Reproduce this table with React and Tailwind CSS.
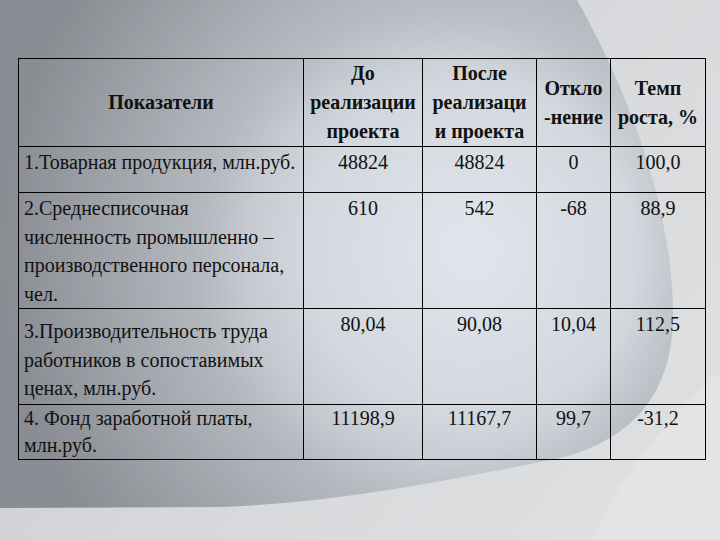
const rows = [
  {
    label: ['1.Товарная продукция, млн.руб.'],
    values: ['48824', '48824', '0', '100,0'],
    h: 'h-[46px]',
    pt: 'pt-[1px]',
  },
  {
    label: [
      '2.Среднесписочная',
      'численность промышленно –',
      'производственного персонала,',
      'чел.',
    ],
    values: ['610', '542', '-68', '88,9'],
    h: 'h-[116px]',
    pt: 'pt-[1px]',
  },
  {
    label: [
      '3.Производительность труда',
      'работников в сопоставимых',
      'ценах, млн.руб.',
    ],
    values: ['80,04', '90,08', '10,04', '112,5'],
    h: 'h-[96px]',
    pt: 'pt-[1px]',
    labelPt: 'pt-[8px]',
  },
  {
    label: ['4. Фонд заработной платы,', 'млн.руб.'],
    values: ['11198,9', '11167,7', '99,7', '-31,2'],
    h: 'h-[55px] leading-[27px]',
    pt: 'pt-0',
  },
]

const Background = () => (
  <svg
    className="absolute inset-0"
    width="720"
    height="540"
    viewBox="0 0 720 540"
  >
    <defs>
      <linearGradient id="base" x1="0" y1="0" x2="720" y2="540" gradientUnits="userSpaceOnUse">
        <stop offset="0" stopColor="#c6c8cb" />
        <stop offset="0.5" stopColor="#d6d8db" />
        <stop offset="1" stopColor="#e0e1e2" />
      </linearGradient>
      <radialGradient id="sphere" cx="470" cy="250" r="470" gradientUnits="userSpaceOnUse">
        <stop offset="0" stopColor="#e1e6ec" />
        <stop offset="0.35" stopColor="#d3d8de" />
        <stop offset="0.65" stopColor="#b3b7bd" />
        <stop offset="1" stopColor="#8b8e93" />
      </radialGradient>
      <radialGradient id="rim" cx="440" cy="260" r="245" gradientUnits="userSpaceOnUse">
        <stop offset="0.8" stopColor="#7d828c" stopOpacity="0" />
        <stop offset="1" stopColor="#7d828c" stopOpacity="0.12" />
      </radialGradient>
    </defs>
    <rect width="720" height="540" fill="url(#base)" />
    <path
      d="M720,372 C668,420 622,470 592,540 L720,540 Z"
      fill="#e3e4e5"
    />
    <path
      d="M0,0 L577,0 C622,80 673,200 673,315 C673,400 625,448 540,462 C430,484 330,503 220,507 L0,508 Z"
      fill="url(#sphere)"
    />
    <path
      d="M0,0 L577,0 C622,80 673,200 673,315 C673,400 625,448 540,462 C430,484 330,503 220,507 L0,508 Z"
      fill="url(#rim)"
    />
  </svg>
)

const serif = "font-['Liberation_Serif','Times_New_Roman','DejaVu_Serif',serif]"

const App = () => {
  return (
    <div className={`relative w-[720px] h-[540px] overflow-hidden text-[#111] ${serif}`}>
      <Background />
      <div className="relative pt-[58px] pl-[18px]">
        <table className="table-fixed border-collapse border border-black w-[688px]">
          <colgroup>
            <col className="w-[285px]" />
            <col className="w-[119px]" />
            <col className="w-[114px]" />
            <col className="w-[74px]" />
            <col className="w-[95px]" />
          </colgroup>
          <thead>
            <tr className="h-[86px] text-[20px] font-bold leading-[29px]">
              <th className="border border-black p-0 text-center align-middle">
                Показатели
              </th>
              <th className="border border-black p-0 text-center align-middle whitespace-nowrap">
                До
                <br />
                реализации
                <br />
                проекта
              </th>
              <th className="border border-black p-0 text-center align-middle whitespace-nowrap">
                После
                <br />
                реализаци
                <br />
                и проекта
              </th>
              <th className="border border-black p-0 text-center align-middle whitespace-nowrap">
                Откло
                <br />
                -нение
              </th>
              <th className="border border-black p-0 text-center align-middle whitespace-nowrap">
                Темп
                <br />
                роста, %
              </th>
            </tr>
          </thead>
          <tbody className="text-[20px] leading-[28.5px]">
            {rows.map((row, i) => (
              <tr key={i} className={row.h}>
                <td
                  className={`border border-black align-top pl-[5px] pr-0 whitespace-nowrap ${
                    row.labelPt || row.pt
                  }`}
                >
                  {row.label.map((line, j) => (
                    <div key={j}>{line}</div>
                  ))}
                </td>
                {row.values.map((v, j) => (
                  <td
                    key={j}
                    className={`border border-black align-top text-center px-0 ${row.pt}`}
                  >
                    {v}
                  </td>
                ))}
              </tr>
            ))}
          </tbody>
        </table>
      </div>
    </div>
  )
}

export default App
